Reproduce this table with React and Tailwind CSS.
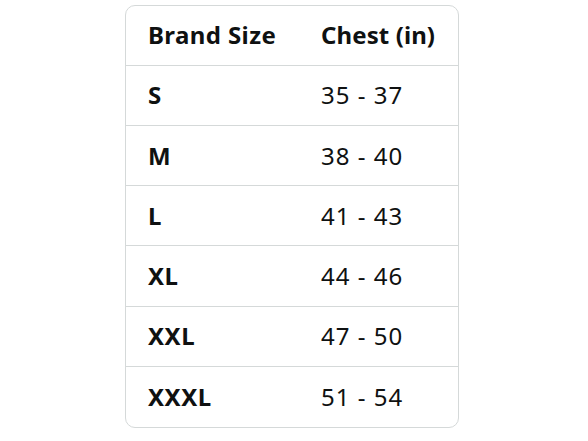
import React from 'react';

const rows = [
  ['S', '35 - 37'],
  ['M', '38 - 40'],
  ['L', '41 - 43'],
  ['XL', '44 - 46'],
  ['XXL', '47 - 50'],
  ['XXXL', '51 - 54'],
];

export default function App() {
  return (
    <div className="w-[588px] h-[441px] bg-white pt-[5px] pl-[125px]" style={{ fontFamily: '"Noto Sans", "Open Sans", sans-serif' }}>
      <div className="w-[334px] h-[423px] border border-[#d5d9d9] rounded-[10px] overflow-hidden flex flex-col text-[#0f1111] text-[24px] leading-none">
        <div className="flex items-center h-[60px] border-b border-[#d5d9d9] font-bold">
          <div className="w-[195px] pl-[22px] tracking-[0.4px]">Brand Size</div>
          <div className="tracking-[0.1px]">Chest (in)</div>
        </div>
        {rows.map(([size, chest], i) => (
          <div
            key={size}
            className={`flex items-center h-[60.3px] ${i < rows.length - 1 ? 'border-b border-[#d5d9d9]' : ''}`}
          >
            <div className="w-[195px] pl-[22px] font-bold tracking-[0.5px]">{size}</div>
            <div className="tracking-[1px]">{chest}</div>
          </div>
        ))}
      </div>
    </div>
  );
}
